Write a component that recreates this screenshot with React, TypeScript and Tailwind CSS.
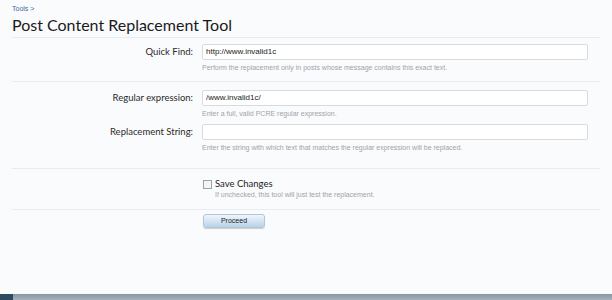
const Row = ({label, value, hint}: {label: string; value: string; hint: string}) => {
    return (
        <div className="flex">
            <div className="w-[190px] pr-[9px] text-right font-['Lato',sans-serif] text-[9.5px] leading-[16px] text-[#2a2a2a]">{label}</div>
            <div className="flex flex-col">
                <div className="w-[386px] h-[16px] bg-white border border-[#d6dbe0] rounded-[2px] px-[3px] text-[8px] leading-[14px] text-[#222]">{value}</div>
                <p className="mt-[3px] text-[7px] leading-[10px] text-[#a0a4a8]">{hint}</p>
            </div>
        </div>
    );
};

const App = () => {
    return (
        <div className="w-[612px] h-[300px] bg-[#fafbfd] flex flex-col font-['Liberation_Sans',sans-serif] overflow-hidden">
            <div className="flex-1 px-3">
                {/* header */}
                <div className="border-b border-[#e8ecf1] h-[38px] pt-[4px]">
                    <p className="text-[7px] leading-[10px] text-[#3a6a9a]">Tools &gt;</p>
                    <h1 className="font-['Lato',sans-serif] text-[16px] leading-[22px] text-[#1a1a1a]">Post Content Replacement Tool</h1>
                </div>

                <div className="mt-[6px] h-[38px] border-b border-[#e8ecf1]">
                    <Row label="Quick Find:" value="http://www.invalid1c" hint="Perform the replacement only in posts whose message contains this exact text." />
                </div>

                <div className="mt-[8px] flex flex-col gap-[5px] h-[79px] border-b border-[#e8ecf1]">
                    <Row label="Regular expression:" value="/www.invalid1c/" hint="Enter a full, valid PCRE regular expression." />
                    <Row label="Replacement String:" value="" hint="Enter the string with which text that matches the regular expression will be replaced." />
                </div>

                <div className="h-[41px] border-b border-[#e8ecf1] pl-[191px] pt-[9px]">
                    <div className="flex items-center gap-[3px]">
                        <span className="w-[9px] h-[9px] border border-[#9aa3ab] bg-[#f4f5f6]" />
                        <span className="font-['Lato',sans-serif] text-[9.5px] leading-[12px] text-[#222]">Save Changes</span>
                    </div>
                    <p className="pl-[12px] text-[7px] leading-[10px] text-[#a0a4a8]">If unchecked, this tool will just test the replacement.</p>
                </div>

                <div className="flex pl-[191px] pt-[4px]">
                    <button className="block w-[62px] h-[14px] rounded-[3px] border border-[#b3c6d6] bg-gradient-to-b from-[#f0f6fb] to-[#b8d2ea] text-[7px] leading-[12px] text-[#222] shadow-[0_1px_1px_rgba(0,0,0,0.18)]">Proceed</button>
                </div>
            </div>

            <div className="h-[6px] flex">
                <div className="w-[13px] bg-[#2f4a60]" />
                <div className="flex-1 bg-gradient-to-b from-[#8896a2] to-[#a6b2bc]" />
            </div>
        </div>
    );
};

export default App;
